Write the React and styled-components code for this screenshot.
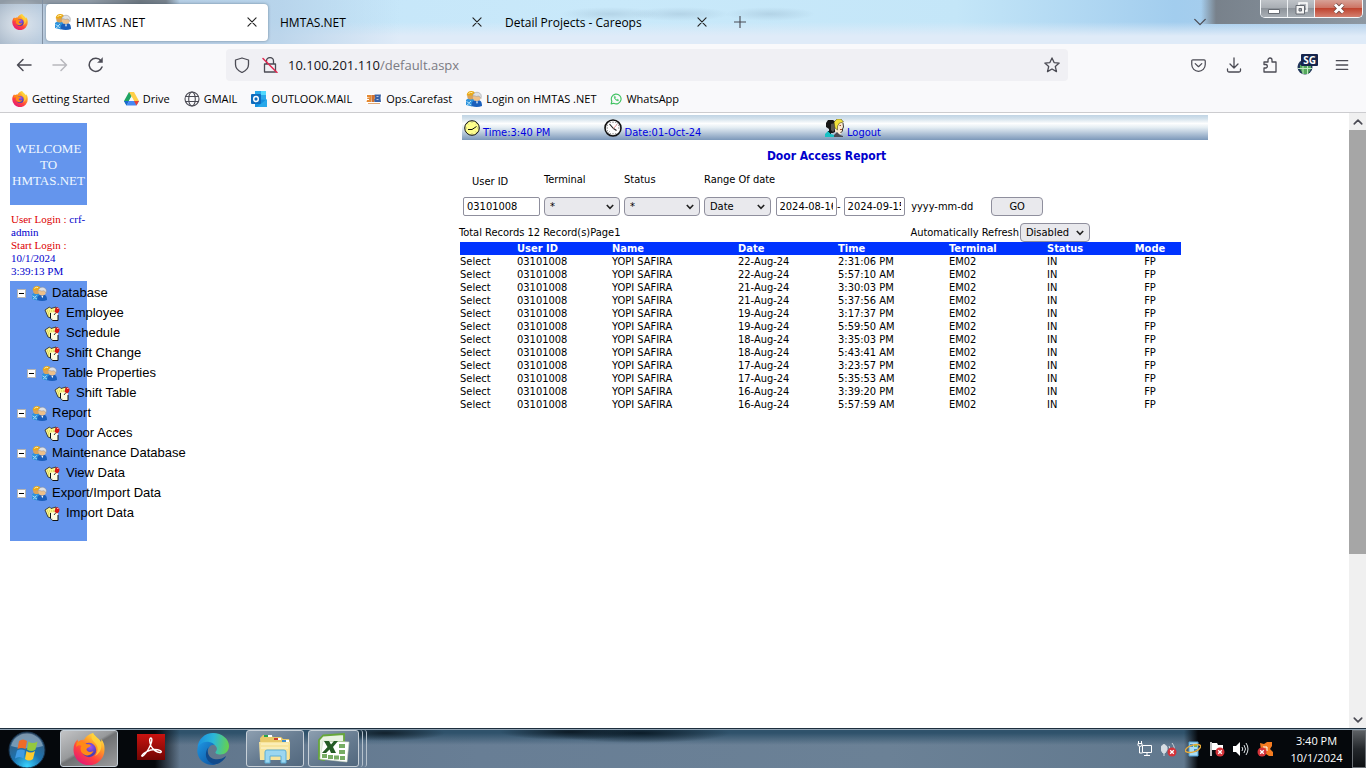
import React from "react";
import styled, { createGlobalStyle } from "styled-components";

const UI_FONT = '"Open Sans", "Noto Sans", sans-serif';
const PAGE_FONT = '"DejaVu Sans Condensed", "DejaVu Sans", sans-serif';

const GlobalStyle = createGlobalStyle`
  *, *::before, *::after { box-sizing: border-box; }
  html, body { margin: 0; }
  body { background: #fff; color: #000; font-family: ${UI_FONT}; }
  button, input, select { font: inherit; color: inherit; margin: 0; }
  button { padding: 0; border: 0; background: none; }
  a { color: inherit; text-decoration: none; }
  svg { display: block; flex: none; }
`;

/* ---------- window frame ---------- */

const Window = styled.div`
  display: flex;
  flex-direction: column;
  min-height: 100vh;
`;

const TitleBar = styled.header`
  display: flex;
  height: 44px;
  background:
    radial-gradient(ellipse 34px 26px at 20px 24px, rgba(255, 255, 255, 0.6), rgba(255, 255, 255, 0)),
    radial-gradient(ellipse 50px 7px at 610px 14px, rgba(120, 150, 175, 0.25), rgba(120, 150, 175, 0)),
    radial-gradient(ellipse 50px 7px at 680px 14px, rgba(120, 150, 175, 0.25), rgba(120, 150, 175, 0)),
    radial-gradient(ellipse 45px 7px at 770px 14px, rgba(120, 150, 175, 0.25), rgba(120, 150, 175, 0)),
    linear-gradient(90deg, rgba(112, 116, 122, 0) calc(100% - 165px), rgba(112, 116, 122, 0.85) calc(100% - 150px), rgba(125, 128, 132, 0.7)) top / 100% 24px no-repeat,
    linear-gradient(90deg, #8f9aa5, #8f9aa5 90px, #6d7780 140px, #77828c 166px, rgba(119, 130, 140, 0) 180px) top / 100% 4px no-repeat,
    linear-gradient(90deg, #a9b9ca 0, #b4c8dc 40px, rgba(180, 208, 232, 0.8) 280px, rgba(180, 208, 232, 0) 400px),
    linear-gradient(180deg, rgba(223, 235, 248, 0) 22px, #dfebf8 36px),
    linear-gradient(90deg, #c3e3f8, #c9e9fa 45%, #c4e6f8 70%, #a2cdee 86%, #b3cfe9);
`;

const PinnedTab = styled.button`
  width: 43px;
  margin-right: 3px;
  padding-left: 12px;
  border-right: 1px solid #8190a2;
`;

const TabStrip = styled.div`
  display: flex;
  align-items: center;
`;

const Tab = styled.div`
  display: flex;
  align-items: center;
  gap: 5px;
  width: 222px;
  height: 37px;
  margin-right: 3px;
  padding: 0 10px 0 9px;
  border-radius: 4px;
  font-size: 12px;
  background: ${(p) => (p.$active ? "#fff" : "transparent")};
  box-shadow: ${(p) => (p.$active ? "0 0 3px rgba(60, 80, 100, 0.6)" : "none")};
`;

const TabTitle = styled.button`
  flex: 1;
  text-align: left;
  white-space: nowrap;
`;

const IconButton = styled.button`
  display: grid;
  place-items: center;
  width: ${(p) => p.$size || 24}px;
  height: ${(p) => p.$size || 24}px;
`;

const TitleRight = styled.div`
  display: flex;
  align-items: flex-start;
  margin-left: auto;
  padding-right: 3px;
`;

const TabListButton = styled(IconButton)`
  margin: 10px 48px 0 0;
`;

const WindowControls = styled.div`
  display: flex;
  height: 18px;
  border: 1px solid #f4f7fa;
  border-top: 0;
  border-radius: 0 0 5px 5px;
  overflow: hidden;
`;

const WindowButton = styled.button`
  display: grid;
  place-items: center;
  width: ${(p) => (p.$close ? 47 : 27)}px;
  border-right: ${(p) => (p.$close ? "0" : "1px solid #eef1f4")};
  background: ${(p) =>
    p.$close
      ? "linear-gradient(#d7a196, #cd7565 45%, #c0442f 50%, #d48070)"
      : "linear-gradient(#bfc3c8, #a9aeb4 45%, #8e949b 50%, #a9afb5)"};
`;

const NavBar = styled.nav`
  display: flex;
  align-items: center;
  height: 42px;
  background: #f9f9fb;
`;

const NavGroup = styled.div`
  display: flex;
  align-items: center;
  gap: 12px;
  width: 226px;
  padding-left: 12px;
`;

const UrlBar = styled.div`
  display: flex;
  align-items: center;
  flex: 1;
  gap: 4px;
  height: 32px;
  padding: 0 4px;
  border-radius: 4px;
  background: #f0f0f4;
`;

const UrlText = styled.a`
  flex: 1;
  padding-left: 2px;
  font-size: 13px;
  color: #7b7b83;
  span { color: #15141a; }
`;

const NavTools = styled.div`
  display: flex;
  align-items: center;
  justify-content: flex-end;
  gap: 12px;
  width: 298px;
  padding-right: 12px;
`;

const Bookmarks = styled.div`
  display: flex;
  align-items: center;
  gap: 14px;
  height: 27px;
  padding: 0 0 1px 12px;
  border-bottom: 1px solid #cccccf;
  background: #f9f9fb;
`;

const Bookmark = styled.a`
  display: flex;
  align-items: center;
  gap: 4px;
  font-size: 11px;
  white-space: nowrap;
`;

/* ---------- page ---------- */

const Viewport = styled.div`
  display: flex;
  flex: 1;
`;

const Page = styled.div`
  display: grid;
  flex: 1;
  grid-template-columns: 459fr 749fr 141fr;
  align-items: start;
`;

const Sidebar = styled.aside`
  width: 77px;
  margin: 10px 0 0 10px;
`;

const Welcome = styled.div`
  display: grid;
  place-items: center;
  height: 82px;
  padding-top: 2px;
  background: #6495ed;
  color: #f0f8ff;
  font: 13px/16px "Liberation Serif", serif;
  text-align: center;
`;

const LoginInfo = styled.div`
  padding: 8px 0 3px 1px;
  color: #00c;
  font: 11px/13px "Liberation Serif", serif;
`;

const LoginLabel = styled.span`
  color: #d00;
`;

const Tree = styled.ul`
  margin: 0;
  padding: 2px 0 18px;
  background: #6495ed;
  list-style: none;
  font: 13px/20px "Liberation Sans", Arial, sans-serif;
`;

const TreeItem = styled.li`
  display: flex;
  align-items: center;
  gap: 5px;
  height: 20px;
  padding-left: ${(p) => p.$indent}px;
  white-space: nowrap;
`;

const Toggle = styled.button`
  display: grid;
  flex: none;
  place-items: center;
  width: 9px;
  height: 9px;
  margin-right: 1px;
  border: 1px solid #b4b4b4;
  background: #fff;
  &::before { content: ""; width: 5px; height: 1px; background: #000; }
`;

const Main = styled.main`
  font-family: ${PAGE_FONT};
  font-size: 11px;
  line-height: 13px;
`;

const StatusBar = styled.div`
  display: grid;
  grid-template-columns: 140fr 222fr 384fr;
  height: 25px;
  margin: 2px 0 0 3px;
  padding-left: 2px;
  background: linear-gradient(#c0d4e4, #d4e2ec 15%, #fdfefe 34%, #e4edf3 50%, #7c98ba);
  color: #0000e0;
`;

const StatusItem = styled.div`
  display: flex;
  align-items: center;
  gap: 3px;
  span, a { padding-top: 9px; }
`;

const Heading = styled.h1`
  margin: 8px 14px 9px 0;
  color: #00c;
  font-size: 12px;
  line-height: 16px;
  text-align: center;
`;

const Filters = styled.form`
  display: flex;
  align-items: flex-end;
  gap: 4px;
  padding-left: 4px;
`;

const Field = styled.div`
  display: flex;
  flex-direction: column;
  gap: ${(p) => p.$gap || 10}px;
  width: ${(p) => p.$width}px;
  white-space: nowrap;
`;

const OffsetLabel = styled.label`
  padding-left: 9px;
`;

const TextInput = styled.input`
  width: 100%;
  height: 19px;
  padding: 0 3px;
  border: 1px solid #8f8f9d;
  border-radius: 2px;
  background: #fff;
`;

const SelectBox = styled.div`
  display: inline-grid;
  align-items: center;
  width: ${(p) => p.$width}px;
  select, svg { grid-area: 1 / 1; }
  svg { justify-self: end; margin-right: 6px; pointer-events: none; }
`;

const SelectInput = styled.select`
  width: 100%;
  height: 19px;
  padding: 0 5px;
  appearance: none;
  border: 1px solid #8f8f9d;
  border-radius: 4px;
  background: #e9e9ed;
`;

const RangeRow = styled.div`
  display: flex;
  align-items: center;
`;

const DateBox = styled.div`
  width: 62px;
  margin-left: ${(p) => p.$gap || 0}px;
`;

const Hint = styled.span`
  padding: 0 18px 0 6px;
`;

const GoButton = styled.button`
  width: 52px;
  height: 19px;
  border: 1px solid #8f8f9d;
  border-radius: 4px;
  background: #e9e9ed;
`;

const Summary = styled.div`
  display: flex;
  align-items: center;
  justify-content: space-between;
  height: 19px;
  margin: 7px 118px 0 0;
  label { display: flex; align-items: center; gap: 1px; }
`;

const Table = styled.table`
  width: calc(100% - 28px);
  margin-left: 1px;
  border-collapse: collapse;
  table-layout: fixed;
  th, td { height: 13px; padding: 0; text-align: left; line-height: 13px; white-space: nowrap; }
  th { background: #03f; color: #fff; }
  th:last-child, td:last-child { text-align: center; }
`;

const Scrollbar = styled.div`
  display: flex;
  flex-direction: column;
  align-items: center;
  justify-content: space-between;
  width: 17px;
  background: #f0f0f0;
`;

const ScrollTrack = styled.div`
  flex: 1;
  align-self: stretch;
  &::before { content: ""; display: block; height: 73%; background: #a6a6a6; }
`;

const ScrollArrow = styled.button`
  display: grid;
  place-items: center;
  width: 17px;
  height: 17px;
`;

/* ---------- taskbar ---------- */

const Taskbar = styled.footer`
  display: flex;
  align-items: stretch;
  height: 40px;
  border-top: 1px solid #1d2e3d;
  background:
    linear-gradient(90deg, #05080c 155px, rgba(5, 8, 12, 0) 180px, rgba(5, 8, 12, 0) calc(100% - 182px), #05080c calc(100% - 168px)),
    radial-gradient(ellipse 70px 8px at 570px 3px, #0d1b26, rgba(13, 27, 38, 0)),
    radial-gradient(ellipse 90px 10px at 640px 4px, #0b1c28, rgba(11, 28, 40, 0)),
    radial-gradient(ellipse 60px 8px at 385px 4px, #12212c, rgba(18, 33, 44, 0)),
    linear-gradient(#2f526b 0, #2f526b 4px, rgba(98, 120, 143, 0) 16px),
    linear-gradient(90deg, #5d7287, #687e95 35%, #6b8196 65%, #5b7389);
  box-shadow: inset 0 1px #8ea1b1;
`;

const TaskButton = styled.button`
  display: grid;
  place-items: center;
  width: ${(p) => p.$width}px;
  margin: 1px ${(p) => p.$after || 0}px 1px 0;
  border: 1px solid ${(p) => (p.$open ? "#c7d0d8" : "transparent")};
  border-radius: 3px;
  background: ${(p) =>
    p.$active
      ? "linear-gradient(150deg, #c3c4c6, #97999b 45%, #6f7173 50%, #9b9c9e)"
      : p.$open
      ? "linear-gradient(150deg, #8d9fb0, #677c91 50%, #52687e)"
      : "transparent"};
`;

const PinnedTask = styled(TaskButton)`
  padding-bottom: 4px;
`;

const StackEdge = styled.div`
  width: 4px;
  margin: 1px 0;
  border-right: 1px solid #b5c1cc;
  border-radius: 0 3px 3px 0;
`;

const Tray = styled.div`
  display: flex;
  align-items: center;
  gap: 8px;
  margin-left: auto;
`;

const TrayClock = styled.time`
  width: 71px;
  color: #fff;
  font-size: 11px;
  line-height: 17px;
  text-align: center;
`;

const ShowDesktop = styled.button`
  width: 14px;
  margin-top: 1px;
  border: 1px solid #6b7075;
  background: linear-gradient(#5b5f63, #23272b 50%, #0d1013);
`;

/* ---------- icons ---------- */

const Line = ({ size = 16, color = "#4b4b54", w = 1.3, children }) => (
  <svg width={size} height={size} viewBox="0 0 16 16" fill="none" stroke={color} strokeWidth={w} strokeLinecap="round" strokeLinejoin="round">
    {children}
  </svg>
);

const CloseIcon = () => (
  <Line size={10} w={1.8} color="#222"><path d="M1.5 1.5l13 13M14.5 1.5l-13 13" /></Line>
);

const Firefox = ({ size = 16 }) => {
  const id = React.useId();
  return (
    <svg width={size} height={size} viewBox="0 0 32 32">
      <defs>
        <linearGradient id={id + "a"} x1="0.85" y1="0" x2="0.2" y2="1">
          <stop offset="0" stopColor="#fff44f" />
          <stop offset="0.35" stopColor="#ff9a27" />
          <stop offset="0.65" stopColor="#ff4240" />
          <stop offset="1" stopColor="#e0127e" />
        </linearGradient>
        <radialGradient id={id + "b"} cx="0.6" cy="0.3">
          <stop offset="0" stopColor="#a055f0" />
          <stop offset="1" stopColor="#4a3fb5" />
        </radialGradient>
      </defs>
      <path d="M20 0c1 3 6 5 8 9 .5-1 .4-2 .2-3 2.600 3 3.500 6.500 3.300 10.500A15.500 15.500 0 0 1 .5 17C.5 12 2 9 4.500 6.500l.7 2.700C7 7 9.500 6.500 11 7c2-4 5-6 9-7z" fill={`url(#${id}a)`} />
      <circle cx="16" cy="17" r="7.200" fill={`url(#${id}b)`} />
      <path d="M4 9c4-2 7 0 9 2 2 .3 4 .2 5 1.500-1 2-3.500 1.500-4.500 3.500 0 2.500 3 4 7 2-1.500 4-6 5.500-9.500 3.500C7 19 7 15 8.500 13 7 12 5 12 3 14z" fill="#ff8a16" />
      <path d="M20 0c-3 4-1 7 2 10 4 4 3 9 0 13 6-3 8-10 5-15C25 5 21 3 20 0z" fill="#ffd43a" opacity="0.8" />
    </svg>
  );
};

const Users = ({ size = 16 }) => (
  <svg width={size} height={size} viewBox="0 0 16 16">
    <path d="M0 9l2-1.500h6v6.500l-2 1.500L0 14z" fill="#2f93dc" />
    <path d="M.5 10.500l2.500 1.500 2-2M1 14l2-1.500 2.500 1.500" stroke="#a9ddf8" fill="none" />
    <path d="M5.500 15c0-4.500 2-6 5.500-6s5 1.500 5 6c-3 1.300-7.500 1.300-10.500 0z" fill="#1a5fbc" />
    <path d="M10 10.500l1 2.500 1-2.500z" fill="#fff" />
    <circle cx="4.800" cy="5" r="3.600" fill="#d9a25c" />
    <path d="M.8 4.500C.5-.5 8-1.500 9.200 2.500L7 4.500z" fill="#eaa915" />
    <path d="M2.500 2.500q2-1.800 4-.8" stroke="#fff3b5" fill="none" />
    <circle cx="10.800" cy="6" r="4" fill="#edc08a" />
    <path d="M6.800 5C7 0 15 0 15.300 5l-.3 2.500L13 5q-3 .8-4.500-.2z" fill="#dfe1e4" stroke="#8e9095" strokeWidth=".5" />
  </svg>
);

const Note = () => (
  <svg width="17" height="17" viewBox="0 0 17 17">
    <path d="M1 5l4.500-3 1.500 1.500L12 2l1 8-6 3-3-1z" fill="#fbf58c" stroke="#222" strokeWidth=".8" />
    <path d="M3 6h7M4 8h3M4 10h2" stroke="#d2c645" strokeDasharray="1 1" />
    <path d="M6.500 7.500h7.500v8H8.500l-2-2z" fill="#fffbe2" />
    <path d="M14 10v5.500H8.500l-2-2V8" fill="none" stroke="#111" />
    <path d="M6.500 13.500h2v2z" fill="#aaa" />
    <path d="M10 10l2-2.500" stroke="#222" strokeWidth=".9" />
    <path d="M11.500 3l2-1 2 2-.5 3-2 1.400-2.500-2z" fill="#d81818" />
    <path d="M13 3.500h1.500" stroke="#ffaea5" />
  </svg>
);

const Drive = () => (
  <svg width="15" height="14" viewBox="0 0 15 14">
    <path d="M5 0h5L5 8.700 2.500 13.500 0 9z" fill="#1fa463" />
    <path d="M5 0h5l5 9h-5z" fill="#ffcf48" />
    <path d="M0 9l2.500 4.500L5 9z" fill="#1967d2" />
    <path d="M5 9h10l-2.500 4.500h-10z" fill="#4688f4" />
    <path d="M10 9h5l-2.500 4.500z" fill="#ea4335" />
    <path d="M7.500 4.500L10 9H5z" fill="#f9f9fb" />
  </svg>
);

const Globe = () => (
  <Line w={1.1}>
    <circle cx="8" cy="8" r="7" />
    <ellipse cx="8" cy="8" rx="3.300" ry="7" />
    <path d="M1.500 5.500h13M1.500 10.500h13" />
  </Line>
);

const Outlook = () => (
  <svg width="16" height="16" viewBox="0 0 16 16">
    <path d="M4 0h11v9H4z" fill="#28a8ea" />
    <path d="M10 0h5v4h-5z" fill="#50d9ff" />
    <path d="M5 4h5v5H5z" fill="#0364b8" />
    <path d="M4 8l12 1v7H4z" fill="#1490df" />
    <path d="M16 8l-10 8h10z" fill="#28a8ea" />
    <rect y="3" width="10" height="10" rx="1" fill="#0f6cbd" />
    <ellipse cx="5" cy="8" rx="2.300" ry="2.500" fill="none" stroke="#fff" strokeWidth="1.400" />
  </svg>
);

const Careops = () => (
  <svg width="16" height="12" viewBox="0 0 16 12">
    <path d="M0 1h16v10H0z" fill="#fff" />
    <path d="M1 2h4.500L5 9H.5L1 7h2V6H1l.5-1.500h2V4H1z" fill="#e58a33" />
    <path d="M5.500 2H9l-.5 7h-3z" fill="#cf7130" />
    <path d="M8.500 1.500H15l-.5 3.500.5 4H8.500l-.3-2.500 1-1.500z" fill="#3a62a6" />
    <path d="M10.500 3.500h2M10.500 6.500h2" stroke="#b9c9e4" />
    <path d="M2 10.500h12" stroke="#db9352" strokeWidth=".8" />
  </svg>
);

const WhatsApp = () => (
  <Line size={12} color="#3fc261" w={1.500}>
    <path d="M1.500 14.500l1-3.500A6.500 6.500 0 1 1 5 13.600z" />
    <path d="M5.500 5c0 3 2.500 5.500 5.500 5.500l.3-1.500-1.800-.8-.8.8C7.500 8.500 7 8 6.700 7l.8-.8L6.800 4.500z" fill="#3fc261" strokeWidth=".6" />
  </Line>
);

const YellowClock = () => (
  <svg width="16" height="16" viewBox="0 0 16 16">
    <circle cx="8" cy="8" r="7.300" fill="#ffff8c" stroke="#111" strokeWidth="1" />
    <path d="M8 1.500v1M8 13.500v1M1.500 8h1M13.500 8h1M3.500 3.500l.7.700M12.500 12.500l-.7-.7M12.500 3.500l-.7.700" stroke="#777" />
    <path d="M12.500 6.500L8 9.500H4" stroke="#111" fill="none" />
  </svg>
);

const WhiteClock = () => (
  <svg width="18" height="18" viewBox="0 0 18 18">
    <circle cx="9" cy="9" r="8" fill="#fff" stroke="#111" strokeWidth="1.600" />
    <path d="M9 2.500v1.500M9 14v1.500M2.500 9H4M14 9h1.500M4.500 13.500l1-1M13.500 4.500l-1 1M6 3l.5 1M12 3l-.5 1M6 15l.5-1M12 15l-.5-1M3 6l1 .5M15 6l-1 .5M3 12l1-.5" stroke="#777" strokeWidth=".9" />
    <path d="M5.500 5L9.500 9.500l3 2" stroke="#222" fill="none" strokeWidth="1.100" />
    <path d="M9.500 9.500l3.500-4" stroke="#e78c8c" strokeWidth=".9" />
  </svg>
);

const Faces = () => (
  <svg width="19" height="18" viewBox="0 0 19 18">
    <path d="M1 4l2-3h5l3 2v5l-1 5-2 1H4V10L1 8z" fill="#161616" />
    <path d="M6 5l4-1v6l-2 3-2-2z" fill="#5a564f" />
    <path d="M0 15l3-3 3 3 3 1v2H0z" fill="#19c0c4" />
    <path d="M3 12l3 3" stroke="#073f42" />
    <path d="M10 3l2-2h4l2 3v7l-2 4h-4l-2-3z" fill="#f9e9cf" />
    <path d="M9 3l3-3h4l2.500 3-4 1-2 3v4L10 9z" fill="#f2e23a" stroke="#35310c" strokeWidth=".5" />
    <path d="M18 4l.5 4-1 2v2l-2 2" stroke="#222" fill="none" strokeWidth=".9" />
    <path d="M14.500 6.500h1.500M15 10.500h2" stroke="#a34a2e" />
    <path d="M9 16l3-3 3 3 3 1v1H9z" fill="#4b4b54" />
  </svg>
);

const ChevronIcon = () => (
  <svg width="8" height="6" viewBox="0 0 8 6" fill="none" stroke="#222" strokeWidth="1.600"><path d="M.8 1l3.200 3.300L7.200 1" /></svg>
);

const ErrorBadge = ({ x = 12, y = 12 }) => (
  <g>
    <circle cx={x} cy={y} r="4.500" fill="#d5333a" />
    <path d={`M${x - 1.8} ${y - 1.8}l3.600 3.600M${x + 1.8} ${y - 1.8}l-3.600 3.600`} stroke="#fff" strokeWidth="1.300" />
  </g>
);

const StartOrb = () => (
  <svg width="38" height="38" viewBox="0 0 38 38">
    <defs>
      <radialGradient id="orb" cx="0.5" cy="0.95" r="0.9">
        <stop offset="0" stopColor="#39d3ff" />
        <stop offset="0.45" stopColor="#1d72ae" />
        <stop offset="1" stopColor="#3c5975" />
      </radialGradient>
    </defs>
    <circle cx="19" cy="19" r="18" fill="url(#orb)" stroke="#16304a" />
    <path d="M3 15a16.500 16.500 0 0 1 32 0c-10 3-22 3-32 0z" fill="#b9cfe0" opacity=".5" />
    <path d="M11 10q4-3 8 0l-1.500 8q-4-2-8 0z" fill="#ee6b27" />
    <path d="M20.500 10.500q4 3 9 0l-2 8q-4 3-8.500 0z" fill="#94c83d" />
    <path d="M9 19.500q4-2 8 0l-1.500 8q-4-3-8.500 0z" fill="#3f9be4" />
    <path d="M18.500 20q4 3 8.500 0l-2 8q-4 3-8 0z" fill="#ffcb2e" />
  </svg>
);

const Acrobat = () => (
  <svg width="28" height="26" viewBox="0 0 28 26">
    <defs><linearGradient id="acro" x1="0" y1="0" x2="0" y2="1"><stop offset="0" stopColor="#ca1310" /><stop offset="1" stopColor="#700503" /></linearGradient></defs>
    <path d="M0 0h28v26H0z" fill="url(#acro)" />
    <path d="M14 4c-2 0-1.500 4 0 8 2 4 6 7 9.500 6.500 2.500-1-1-3-6-3S6 19 4.800 21.500c.2 2.500 4-2 6.700-6.500S16 4.500 14 4z" fill="none" stroke="#fff" strokeWidth="1.400" />
  </svg>
);

const Edge = () => (
  <svg width="32" height="32" viewBox="0 0 32 32">
    <defs>
      <linearGradient id="edgeTop" x1="0" y1="0.4" x2="1" y2="0.5"><stop offset="0" stopColor="#1a8fe0" /><stop offset="0.5" stopColor="#2cb8d8" /><stop offset="1" stopColor="#66d24b" /></linearGradient>
      <linearGradient id="edgeLow" x1="0" y1="0" x2="1" y2="1"><stop offset="0" stopColor="#1e96e2" /><stop offset="1" stopColor="#0c4d9a" /></linearGradient>
    </defs>
    <path d="M.5 15C1 6 8 0 16 0c9 0 16 6 16 13 0 5-4 8.500-8.500 8.500-4 0-5.500-1.500-5-2.500 2-2 2-5-1-7C12 9 4 10 .5 15z" fill="url(#edgeTop)" />
    <path d="M.3 17C1 11 7 8 12 9c3 .5 5 2 6 3-5-1-8 4-7 9 1 6 6 9 11 8-2 2-4 3-6 3C7 32 0 26 .3 17z" fill="url(#edgeLow)" />
    <path d="M12 14c-3 3-1 11 5 12 5 1 9-.5 12-3-1 3-5 7-9 8-7 1-12-5-11-11 .4-3 1.500-5 3-6z" fill="#114a8b" />
  </svg>
);

const Explorer = () => (
  <svg width="34" height="30" viewBox="0 0 34 30">
    <path d="M2 4l3-3h8l2 2h8l2 2h6l1 3v17H3z" fill="#e8ca69" />
    <path d="M6 1h4v2H6z" fill="#27a44d" /><path d="M16 4h4v2h-4z" fill="#ca3e31" /><path d="M24 6h4v2h-4z" fill="#3f8dce" />
    <path d="M10 2h4M20 5h3M28 7h3" stroke="#fff" strokeWidth="2" />
    <path d="M1 8h31l-1 18H2z" fill="#f7e49c" />
    <path d="M3 10h27M3 14h27" stroke="#fff7cf" />
    <path d="M7 29V18q0-2 2-2h17q2 0 2 2v11h-5v-7H12v7z" fill="#9bd6f0" stroke="#5daed6" />
  </svg>
);

const Excel = () => (
  <svg width="34" height="32" viewBox="0 0 34 32">
    <path d="M6 2.500L27 1v8H12L7 27l-5-1V7z" fill="#e9f3e2" stroke="#67a73a" strokeWidth="1.800" />
    <path d="M6 8l26 1-2 20-27-3z" fill="#fff" stroke="#c9d8c2" strokeWidth=".6" />
    <path d="M22 11h6v4h-6zM22 17h6v4h-6zM5 21h5v4H5zM11 22h5v4h-5zM17 22.500h5v4h-5zM23 23h5v4h-5z" fill="#77ad64" />
    <path d="M7 8h5l2 3.500L17 8h4l-5 6 3 6h-5l-1.500-3.500L9 20H5l5.500-6z" fill="#245b25" />
  </svg>
);

/* ---------- data ---------- */

const tabs = [
  { title: "HMTAS .NET", active: true },
  { title: "HMTAS.NET" },
  { title: "Detail Projects - Careops" },
];

const bookmarks = [
  ["Getting Started", <Firefox />],
  ["Drive", <Drive />],
  ["GMAIL", <Globe />],
  ["OUTLOOK.MAIL", <Outlook />],
  ["Ops.Carefast", <Careops />],
  ["Login on HMTAS .NET", <Users />],
  ["WhatsApp", <WhatsApp />],
];

const tree = [
  ["Database", 7, true],
  ["Employee", 34],
  ["Schedule", 34],
  ["Shift Change", 34],
  ["Table Properties", 17, true],
  ["Shift Table", 44],
  ["Report", 7, true],
  ["Door Acces", 34],
  ["Maintenance Database", 7, true],
  ["View Data", 34],
  ["Export/Import Data", 7, true],
  ["Import Data", 34],
];

const columns = [
  ["", 57], ["User ID", 95], ["Name", 126], ["Date", 100],
  ["Time", 111], ["Terminal", 98], ["Status", 72], ["Mode", 62],
];

const entries = [
  ["22-Aug-24", "2:31:06 PM"], ["22-Aug-24", "5:57:10 AM"],
  ["21-Aug-24", "3:30:03 PM"], ["21-Aug-24", "5:37:56 AM"],
  ["19-Aug-24", "3:17:37 PM"], ["19-Aug-24", "5:59:50 AM"],
  ["18-Aug-24", "3:35:03 PM"], ["18-Aug-24", "5:43:41 AM"],
  ["17-Aug-24", "3:23:57 PM"], ["17-Aug-24", "5:35:53 AM"],
  ["16-Aug-24", "3:39:20 PM"], ["16-Aug-24", "5:57:59 AM"],
];

const Dropdown = ({ id, value, width, label }) => (
  <SelectBox $width={width}>
    <SelectInput id={id} aria-label={label} defaultValue={value}>
      <option>{value}</option>
    </SelectInput>
    <ChevronIcon />
  </SelectBox>
);

function BrowserChrome() {
  return (
    <>
      <TitleBar>
        <PinnedTab aria-label="Firefox View"><Firefox /></PinnedTab>
        <TabStrip>
          {tabs.map((t) => (
            <Tab key={t.title} $active={t.active}>
              {t.active && <Users />}
              <TabTitle>{t.title}</TabTitle>
              <IconButton $size={12} aria-label="Close tab"><CloseIcon /></IconButton>
            </Tab>
          ))}
          <IconButton $size={38} aria-label="New tab">
            <Line size={12} w={1.500}><path d="M8 0v16M0 8h16" /></Line>
          </IconButton>
        </TabStrip>
        <TitleRight>
          <TabListButton aria-label="List tabs">
            <Line size={14} w={1.500}><path d="M2 5l6 6 6-6" /></Line>
          </TabListButton>
          <WindowControls>
            <WindowButton aria-label="Minimize">
              <svg width="12" height="12"><path d="M.5 6.500h11v4H.5z" fill="#fff" stroke="#666b72" /></svg>
            </WindowButton>
            <WindowButton aria-label="Restore">
              <svg width="13" height="13"><path d="M4 1h8v8H4z" fill="none" stroke="#fff" strokeWidth="1.500" /><path d="M1 3.500h8.500V12H1z" fill="#f4f4f4" stroke="#666b72" /><path d="M4 6.500h2.500V9H4z" fill="#989ea5" stroke="#666b72" /></svg>
            </WindowButton>
            <WindowButton $close aria-label="Close">
              <svg width="12" height="11"><path d="M2 1.500l8 8M10 1.500l-8 8" stroke="#6d4540" strokeWidth="4.500" /><path d="M2 1.500l8 8M10 1.500l-8 8" stroke="#fff" strokeWidth="3" /></svg>
            </WindowButton>
          </WindowControls>
        </TitleRight>
      </TitleBar>
      <NavBar>
        <NavGroup>
          <IconButton aria-label="Back"><Line w={1.500}><path d="M15 8H1.500M7 2.500L1.500 8 7 13.500" /></Line></IconButton>
          <IconButton aria-label="Forward"><Line w={1.500} color="#b8b8bd"><path d="M1 8h13.500M9 2.500L14.500 8 9 13.500" /></Line></IconButton>
          <IconButton aria-label="Reload">
            <Line w={1.500}><path d="M14 10a6.600 6.600 0 1 1-1-6.300" /><path d="M14.500 1v4.500H10z" fill="#4b4b54" strokeWidth=".5" /></Line>
          </IconButton>
        </NavGroup>
        <UrlBar>
          <IconButton aria-label="Tracking protection"><Line><path d="M8 1l6.500 2v4.500c0 4-3 6.500-6.500 8-3.500-1.500-6.500-4-6.500-8V3z" /></Line></IconButton>
          <IconButton aria-label="Connection not secure">
            <Line><path d="M4.500 7V4a3.500 3.500 0 0 1 7 0v3M2.500 7h11v8h-11z" /><path d="M1 1.500l14 14" stroke="#e22850" strokeWidth="1.500" /></Line>
          </IconButton>
          <UrlText href="#"><span>10.100.201.110</span>/default.aspx</UrlText>
          <IconButton aria-label="Bookmark this page">
            <Line><path d="M8 .9l2.100 4.700 5.100.5-3.900 3.400 1.200 5.100L8 12l-4.500 2.600 1.200-5.100L.8 6.100l5.100-.5z" /></Line>
          </IconButton>
        </UrlBar>
        <NavTools>
          <IconButton aria-label="Pocket"><Line size={15}><path d="M2 2h12q1.200 0 1.200 1.200V7a7.200 7.200 0 0 1-14.400 0V3.200Q.8 2 2 2zM4.500 6L8 9.300 11.500 6" /></Line></IconButton>
          <IconButton aria-label="Downloads"><Line><path d="M8 1v10M4 7l4 4 4-4M1.500 12v1.500q0 1.500 1.500 1.500h10q1.500 0 1.500-1.500V12" /></Line></IconButton>
          <IconButton aria-label="Extensions"><Line><path d="M2 5h4V3a2 2 0 0 1 4 0v2h4v10H2v-4h2a1.800 1.800 0 0 0 0-3.500H2z" /></Line></IconButton>
          <IconButton aria-label="SG extension">
            <svg width="24" height="28" viewBox="0 0 24 28">
              <circle cx="11" cy="14" r="7.500" fill="#22365a" />
              <path d="M6 12h11v4l-3 5H9l-3-5z" fill="#55a95d" />
              <path d="M4 15.500h14M9 12v9M13.500 12v9" stroke="#c0e8c0" />
              <rect x="7" y="1" width="17" height="12" rx="1" fill="#16254c" />
              <text x="15.500" y="11" fill="#fff" fontSize="10" fontWeight="700" textAnchor="middle">SG</text>
            </svg>
          </IconButton>
          <IconButton aria-label="Menu"><Line size={14} w={1.500}><path d="M1.500 3h13M1.500 8h13M1.500 13h13" /></Line></IconButton>
        </NavTools>
      </NavBar>
      <Bookmarks>
        {bookmarks.map(([name, icon]) => (
          <Bookmark key={name} href="#">{icon}{name}</Bookmark>
        ))}
      </Bookmarks>
    </>
  );
}

function SideMenu() {
  return (
    <Sidebar>
      <Welcome>WELCOME TO HMTAS.NET</Welcome>
      <LoginInfo>
        <LoginLabel>User Login :</LoginLabel> crf-admin<br />
        <LoginLabel>Start Login :</LoginLabel><br />10/1/2024 3:39:13 PM
      </LoginInfo>
      <Tree>
        {tree.map(([name, indent, folder]) => (
          <TreeItem key={name} $indent={indent}>
            {folder && <Toggle aria-label={"Collapse " + name} />}
            {folder ? <Users size={15} /> : <Note />}
            <a href="#">{name}</a>
          </TreeItem>
        ))}
      </Tree>
    </Sidebar>
  );
}

function Report() {
  return (
    <Main>
      <StatusBar>
        <StatusItem><YellowClock /><span>Time:3:40 PM</span></StatusItem>
        <StatusItem><WhiteClock /><span>Date:01-Oct-24</span></StatusItem>
        <StatusItem><Faces /><a href="#">Logout</a></StatusItem>
      </StatusBar>
      <Heading>Door Access Report</Heading>
      <Filters onSubmit={(e) => e.preventDefault()}>
        <Field $width={77} $gap={9}>
          <OffsetLabel htmlFor="user">User ID</OffsetLabel>
          <TextInput id="user" defaultValue="03101008" />
        </Field>
        <Field $width={76} $gap={11}>
          <label htmlFor="terminal">Terminal</label>
          <Dropdown id="terminal" value="*" width={76} />
        </Field>
        <Field $width={76} $gap={11}>
          <label htmlFor="status">Status</label>
          <Dropdown id="status" value="*" width={76} />
        </Field>
        <Field $width={339} $gap={11}>
          <label htmlFor="range">Range Of date</label>
          <RangeRow>
            <Dropdown id="range" value="Date" width={67} />
            <DateBox $gap={5}><TextInput aria-label="From date" defaultValue="2024-08-16" /></DateBox>
            <span>-</span>
            <DateBox $gap={3}><TextInput aria-label="To date" defaultValue="2024-09-15" /></DateBox>
            <Hint>yyyy-mm-dd</Hint>
            <GoButton>GO</GoButton>
          </RangeRow>
        </Field>
      </Filters>
      <Summary>
        <span>Total Records 12 Record(s)Page1</span>
        <label>Automatically Refresh<Dropdown value="Disabled" width={70} label="Automatically Refresh" /></label>
      </Summary>
      <Table>
        <colgroup>
          {columns.map(([name, w]) => <col key={name} width={`${(w / 721) * 100}%`} />)}
        </colgroup>
        <thead>
          <tr>{columns.map(([name]) => <th key={name}>{name}</th>)}</tr>
        </thead>
        <tbody>
          {entries.map(([date, time]) => (
            <tr key={date + time}>
              <td><a href="#">Select</a></td>
              <td>03101008</td>
              <td>YOPI SAFIRA</td>
              <td>{date}</td>
              <td>{time}</td>
              <td>EM02</td>
              <td>IN</td>
              <td>FP</td>
            </tr>
          ))}
        </tbody>
      </Table>
    </Main>
  );
}

function WindowsTaskbar() {
  return (
    <Taskbar>
      <TaskButton $width={54} $after={6} aria-label="Start"><StartOrb /></TaskButton>
      <TaskButton $width={58} $after={8} $open $active aria-label="Firefox"><Firefox size={32} /></TaskButton>
      <PinnedTask $width={50} $after={12} aria-label="Adobe Acrobat"><Acrobat /></PinnedTask>
      <TaskButton $width={50} $after={8} aria-label="Edge"><Edge /></TaskButton>
      <TaskButton $width={58} $after={4} $open aria-label="File Explorer"><Explorer /></TaskButton>
      <TaskButton $width={51} $open aria-label="Excel"><Excel /></TaskButton>
      <StackEdge />
      <StackEdge />
      <Tray>
        <svg width="16" height="16" fill="none" stroke="#fff"><path d="M5.500 4.500h9v7h-9zM7 14.500h6M10 12v2M2.500 6v6h3M1 2.500h4v2q-2 2-4 0zM1.500 0v2M4.500 0v2" /></svg>
        <svg width="16" height="16"><path d="M0 6q3-5 6 0v3L4 12H2L0 9zM3 11v4" fill="#d7dde3" stroke="#d7dde3" /><path d="M8 5q2 3 0 5M11 2q4 5 1 9" stroke="#cfd6dc" fill="none" /><ErrorBadge x={11} y={11} /></svg>
        <svg width="16" height="16"><path d="M4 1h9v14H4z" fill="#a8dcf5" stroke="#4f9cd0" /><path d="M5 3h3v3H5zM9 8h3v3H9z" fill="#3c87c4" /><path d="M9 3h3v3H9z" fill="#74b853" /><path d="M0 10C2 4 13 2 16 5c-2 6-12 8-16 5z" fill="none" stroke="#e6a93a" strokeWidth="1.500" /></svg>
        <svg width="16" height="16"><path d="M2 1v14" stroke="#fff" strokeWidth="1.500" /><path d="M3 2h5l1 2h5v6H9L8 9H3z" fill="#fff" /><ErrorBadge x={11} y={11} /></svg>
        <svg width="16" height="16"><path d="M0 5h3l4-4v14l-4-4H0z" fill="#fff" /><path d="M9 6q1.500 2 0 4M11 4q3 4 0 8M13 2q4 6 0 12" stroke="#dfe4e8" fill="none" /></svg>
        <svg width="16" height="16"><path d="M3 2l4 1 3-2 5 0 0 4-2 3 3 3 0 4-4 0-3-2-6 1 1-5z" fill="#f47b20" /><path d="M6 6h4v4" stroke="#fff" fill="none" /><ErrorBadge x={5} y={11} /></svg>
        <TrayClock>3:40 PM<br />10/1/2024</TrayClock>
      </Tray>
      <ShowDesktop aria-label="Show desktop" />
    </Taskbar>
  );
}

export default function App() {
  return (
    <Window>
      <GlobalStyle />
      <BrowserChrome />
      <Viewport>
        <Page>
          <SideMenu />
          <Report />
        </Page>
        <Scrollbar>
          <ScrollArrow aria-label="Scroll up"><Line size={10} w={2.600}><path d="M2 11l6-6 6 6" /></Line></ScrollArrow>
          <ScrollTrack />
          <ScrollArrow aria-label="Scroll down"><Line size={10} w={2.600}><path d="M2 5l6 6 6-6" /></Line></ScrollArrow>
        </Scrollbar>
      </Viewport>
      <WindowsTaskbar />
    </Window>
  );
}
